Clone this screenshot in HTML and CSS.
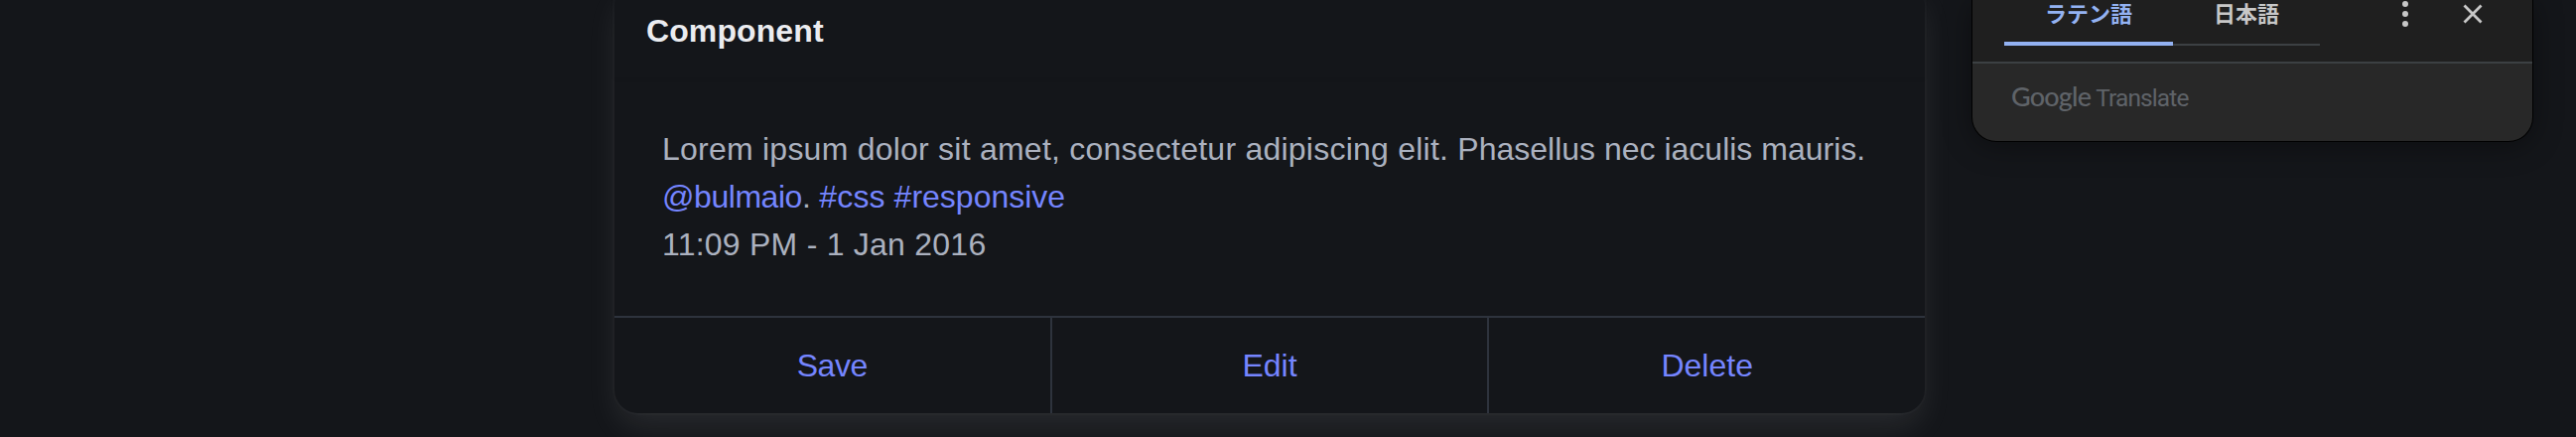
FILE: index.html
```html
<!DOCTYPE html>
<html lang="en">
<head>
<meta charset="utf-8">
<title>Card</title>
<link rel="stylesheet" href="styles.css">
</head>
<body>
<main class="page">
  <article class="card">
    <header class="card-header"><p class="card-title">Component</p></header>
    <div class="card-content">
      <p class="line"><span class="sentence-wide">Lorem ipsum dolor sit amet, consectetur adipiscing elit. </span>Phasellus nec iaculis mauris.</p>
      <p class="line"><span class="mention"><a class="link">@bulmaio</a>.</span> <a class="link hashtag">#css</a> <a class="link">#responsive</a></p>
      <p class="line line-time"><time>11:09 PM - 1 Jan 2016</time></p>
    </div>
    <footer class="card-footer">
      <a class="card-action">Save</a>
      <a class="card-action">Edit</a>
      <a class="card-action">Delete</a>
    </footer>
  </article>
</main>
<aside class="translate">
  <div class="translate-bar">
    <div class="tabs">
      <div class="tab tab-active">ラテン語</div>
      <div class="tab">日本語</div>
    </div>
    <svg class="menu-icon" width="10" height="30" viewBox="0 0 10 30"><circle cx="5" cy="4" r="3"/><circle cx="5" cy="14" r="3"/><circle cx="5" cy="24" r="3"/></svg>
    <svg class="close-icon" width="20" height="20" viewBox="0 0 20 20"><path d="M1.5 1.5 18.5 18.5M18.5 1.5 1.5 18.5"/></svg>
  </div>
  <div class="translate-brand"><span class="brand-google">Google</span><span class="brand-translate">Translate</span></div>
</aside>
</body>
</html>
```
FILE: styles.css
```css
* { box-sizing: border-box; margin: 0; }
body {
  height: 440px;
  overflow: hidden;
  background: #14161a;
  color: #abb1bf;
  font: 32px/48px "Liberation Sans", Arial, sans-serif;
}
.page { display: flow-root; padding-left: 619px; }
.card {
  width: 1320px;
  margin-top: -18px;
  border-radius: 24px;
  background: #14161a;
  box-shadow: 0 16px 32px -4px rgba(235, 236, 240, 0.1), 0 0 0 2px rgba(235, 236, 240, 0.02);
}
.card-header { height: 96px; padding: 25px 32px 23px; box-shadow: 0 2px 4px rgba(9, 10, 12, 0.06); }
.card-title { color: #ebecf0; font-weight: 700; letter-spacing: 0.1px; }
.card-content { height: 240px; padding: 48px; }
.line { white-space: nowrap; }
.sentence-wide { letter-spacing: 0.235px; }
.mention { letter-spacing: -0.45px; }
.hashtag { letter-spacing: 0.15px; }
.line-time { letter-spacing: 0.24px; }
.link, .card-action { color: #7585ff; }
.card-footer { display: flex; border-top: 2px solid #2e333d; }
.card-action { flex: 1; padding: 24px; text-align: center; }
.card-action:first-child { letter-spacing: -0.4px; }
.card-action + .card-action { border-left: 2px solid #2e333d; }
.translate {
  position: absolute;
  left: 1987px;
  top: 0;
  width: 564px;
  height: 142px;
  border-radius: 0 0 24px 24px;
  background: #282828;
  box-shadow: 0 0 0 1px #000, 0 4px 30px rgba(0, 0, 0, 0.4);
}
.translate-bar {
  display: flex;
  height: 64px;
  padding-left: 32px;
  border-bottom: 2px solid #3c4043;
  background: #1f1f1f;
}
.tabs { display: flex; width: 318px; height: 46px; }
.tab {
  width: 148px;
  border-bottom: 2px solid #3c4043;
  color: #c7c7c7;
  text-align: center;
  font: 700 22px/25px "Noto Sans CJK JP", sans-serif;
}
.tab-active { width: 170px; border-bottom: 4px solid #93b2f2; color: #93b2f2; }
.menu-icon { margin-left: 81px; fill: #c7c7c7; }
.close-icon { margin: 4px 0 0 53px; fill: none; stroke: #c7c7c7; stroke-width: 2.8; }
.translate-brand {
  display: flex;
  align-items: baseline;
  gap: 5px;
  padding: 19px 0 0 39px;
  color: #5f6368;
  line-height: 28px;
}
.brand-google { font-family: Lato, sans-serif; font-size: 27px; font-weight: 500; letter-spacing: -0.8px; }
.brand-translate { font-family: Roboto, sans-serif; font-size: 24.5px; letter-spacing: -0.9px; }
```
